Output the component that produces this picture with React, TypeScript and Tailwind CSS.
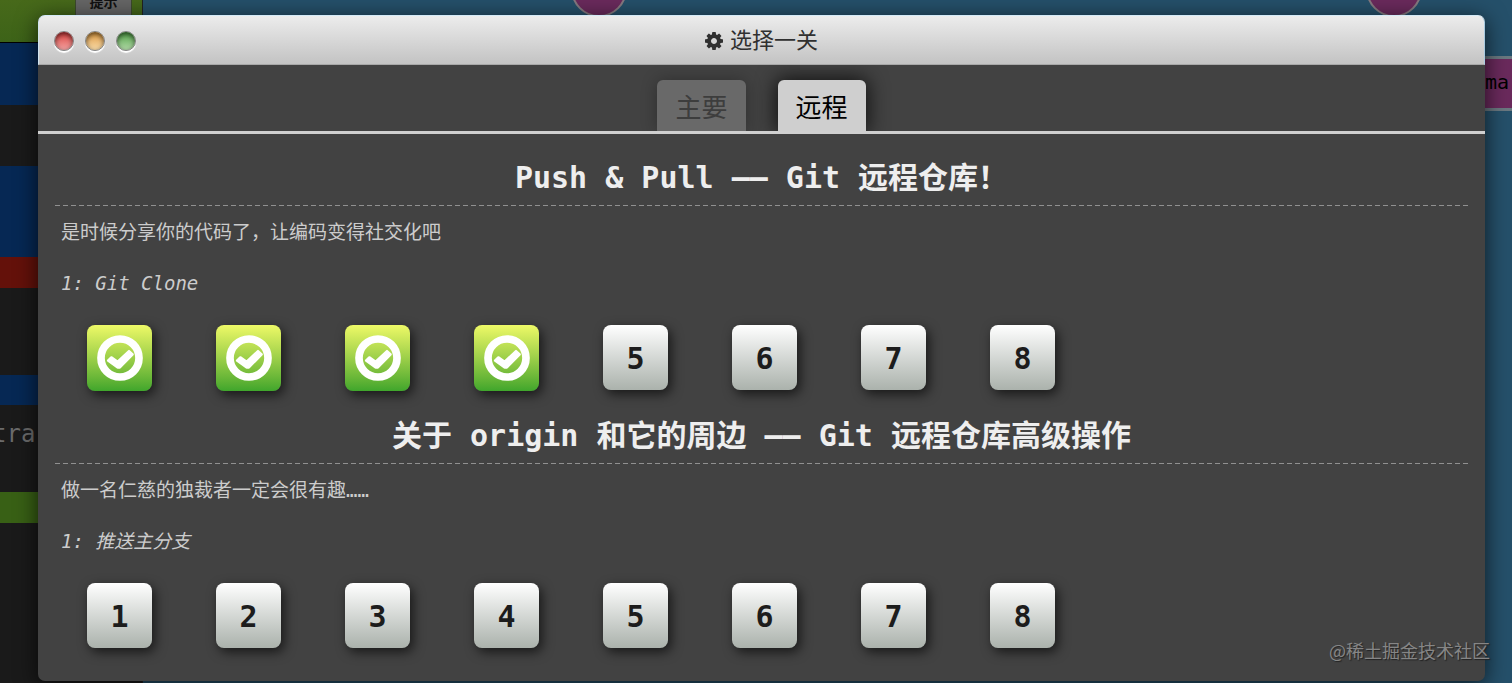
import type { ReactNode } from "react";

const bands = [
  { className: "h-[42px] bg-linear-to-b from-[#47691a] to-[#3d6318]" },
  { className: "h-[63px] bg-[#062854] border-t border-black" },
  { className: "h-[61px] bg-[#1a1a1a]" },
  { className: "h-[91px] bg-[#062854]" },
  { className: "h-[31px] bg-[#64110a]" },
  { className: "h-[87px] bg-[#1a1a1a]" },
  { className: "h-[30px] bg-[#062854]" },
  { className: "h-[87px] bg-[#1a1a1a]", text: "tra" },
  { className: "h-[31px] bg-[#386015]" },
];

const series = [
  {
    title: "Push & Pull —— Git 远程仓库！",
    about: "是时候分享你的代码了，让编码变得社交化吧",
    name: "1: Git Clone",
    solved: 4,
  },
  {
    title: "关于 origin 和它的周边 —— Git 远程仓库高级操作",
    about: "做一名仁慈的独裁者一定会很有趣……",
    name: "1: 推送主分支",
    solved: 0,
  },
];

const levels = [1, 2, 3, 4, 5, 6, 7, 8];

function GearIcon() {
  return (
    <svg viewBox="128 128 1536 1536" className="size-[18px]" fill="currentColor" aria-hidden="true">
      <path d="M1152 896q0-106-75-181t-181-75-181 75-75 181 75 181 181 75 181-75 75-181zm512-109v222q0 12-8 23t-20 13l-185 28q-19 54-39 91 35 50 107 138 10 12 10 25t-9 23q-27 37-99 108t-94 71q-12 0-26-9l-138-108q-44 23-91 38-16 136-29 186-7 28-36 28h-222q-14 0-24.5-8.5t-11.5-21.5l-28-184q-49-16-90-37l-141 107q-10 9-25 9-14 0-25-11-126-114-165-168-7-10-7-23 0-12 8-23 15-21 51-66.5t54-70.5q-27-50-41-99l-183-27q-13-2-21-12.5t-8-23.5v-222q0-12 8-23t19-13l186-28q14-46 39-92-40-57-107-138-10-12-10-24 0-10 9-23 26-36 98.5-107.5t94.5-71.5q13 0 26 10l138 107q44-23 91-38 16-136 29-186 7-28 36-28h222q14 0 24.5 8.5t11.5 21.5l28 184q49 16 90 37l142-107q9-9 24-9 13 0 25 10 129 119 165 170 7 8 7 22 0 12-8 23-15 21-51 66.5t-54 70.5q26 50 41 98l183 28q13 2 21 12.5t8 23.5z" />
    </svg>
  );
}

function CheckIcon() {
  return (
    <svg viewBox="0 0 138 138" className="size-[46px]" aria-hidden="true">
      <circle cx="69" cy="69" r="57" fill="none" stroke="currentColor" strokeWidth="23" />
      <path
        d="M33 77L43 67L62 80L96 48L107 58L70 96Q66 99 61 97Z"
        fill="currentColor"
        stroke="currentColor"
        strokeWidth="7"
        strokeLinejoin="round"
      />
    </svg>
  );
}

function Light({ label, className }: { label: string; className: string }) {
  return (
    <button
      type="button"
      aria-label={label}
      className={`size-5 rounded-full border border-[#858585] shadow-[0_2px_1px_#ffffff,inset_0_2px_5px_rgba(0,0,0,0.6)] ${className}`}
    />
  );
}

function Tab({ active, children }: { active?: boolean; children: ReactNode }) {
  return (
    <button
      type="button"
      role="tab"
      aria-selected={active ? true : false}
      className={`h-[51px] rounded-t-[6px] px-[18px] pt-1 text-[26px] leading-[46px] ${
        active
          ? "bg-[#cfcfcf] text-black shadow-[0_0_20px_2px_rgba(0,0,0,0.75)]"
          : "bg-[#696969] text-[#3d3d3d] shadow-[0_0_16px_rgba(0,0,0,0.3)]"
      }`}
    >
      {children}
    </button>
  );
}

function Level({ number, solved }: { number: number; solved: boolean }) {
  return (
    <button
      type="button"
      aria-label={`${number}`}
      className={`flex w-[65px] items-center justify-center rounded-[8px] text-[30px] font-bold shadow-[3px_4px_12px_rgba(0,0,0,0.65)] ${
        solved
          ? "h-[66px] bg-linear-to-b from-[#eef967] to-[#3fa62c] text-white"
          : "h-[65px] bg-linear-to-b from-white to-[#abb2ac] pt-[2px] text-[#1c1c1c]"
      }`}
    >
      {solved ? <CheckIcon /> : number}
    </button>
  );
}

function Backdrop() {
  return (
    <div className="absolute inset-0 flex overflow-hidden bg-[#25506a]" aria-hidden="true">
      <div className="relative w-[143px] border-r border-[#222222] bg-[#1a1a1a]">
        {bands.map((band, i) => (
          <div key={i} className={band.className}>
            {band.text && (
              <div className="-ml-2 pt-[12px] text-[24px] leading-[34px] text-[#6b6b6b]">{band.text}</div>
            )}
          </div>
        ))}
        <div className="absolute left-[75px] top-0 h-6 w-[57px] border-x border-[#3c4a2c] bg-[#666666] text-center text-[14px] font-bold leading-[4px] text-[#111111]">
          提示
        </div>
      </div>
      <div className="relative grow">
        <div className="absolute -top-[39px] left-[428px] size-[56px] rounded-full border-2 border-[#857a80] bg-[#6a2a5c]" />
        <div className="absolute -top-[39px] right-[90px] size-[56px] rounded-full border-2 border-[#857a80] bg-[#6a2a5c]" />
        <div className="absolute -right-8 top-[56px] flex h-[55px] w-[70px] items-center border-[3px] border-[#6a7880] bg-[#6a2a5c] pb-1 pl-2 text-[20px] text-black">
          ma.
        </div>
      </div>
    </div>
  );
}

export default function App() {
  return (
    <div className="relative min-h-screen overflow-hidden pb-[2px] pl-[38px] pr-[27px] pt-[15px] font-['DejaVu_Sans_Mono','Noto_Sans_CJK_SC',monospace]">
      <Backdrop />
      <main className="relative min-h-[666px] rounded-[7px] bg-[#424242] shadow-[0_4px_22px_rgba(0,0,0,0.7)]">
        <header className="flex h-[50px] items-center rounded-t-[7px] border border-b-[#a8a8a8] border-l-[#cfe3ee] border-r-[#a9cbe0] border-t-[#d3e9f6] bg-linear-to-b from-[#ececec] to-[#c3c3c3] px-[15px] pt-[2px]">
          <div className="flex flex-1 gap-[11px]">
            <Light label="关闭" className="bg-linear-to-b from-[#d8393c] to-[#f3a3a3]" />
            <Light label="最小化" className="bg-linear-to-b from-[#dd9a3c] to-[#f8dba8]" />
            <Light label="最大化" className="bg-linear-to-b from-[#4fa044] to-[#b2dba8]" />
          </div>
          <h1 className="flex items-center gap-[7px] text-[22px] leading-8 text-[#303030]">
            <GearIcon />
            选择一关
          </h1>
          <div className="flex-1" />
        </header>
        <div
          role="tablist"
          className="flex justify-center gap-8 overflow-hidden border-b-[3px] border-[#d0d0d0] pt-[15px]"
        >
          <Tab>主要</Tab>
          <Tab active>远程</Tab>
        </div>
        <div className="px-[17px] pt-4">
          {series.map((item) => (
            <section key={item.title} className="h-[258px]">
              <h2 className="h-[55px] text-center text-[30px] font-bold leading-[56px] text-[#eeeeee]">
                {item.title}
              </h2>
              <div className="h-px bg-[repeating-linear-gradient(to_right,#909090_0_5px,transparent_5px_8px)]" />
              <p className="px-[6px] pt-[10px] text-[19px] leading-8 text-[#cccccc]">{item.about}</p>
              <h3 className="px-[6px] pt-[19px] text-[19px] italic leading-8 text-[#cccccc]">{item.name}</h3>
              <div className="flex items-start gap-16 pl-8 pt-[26px]">
                {levels.map((n) => (
                  <Level key={n} number={n} solved={n <= item.solved} />
                ))}
              </div>
            </section>
          ))}
        </div>
      </main>
      <div className="absolute bottom-[17px] right-[22px] font-['Noto_Sans_CJK_SC',sans-serif] text-[18px] leading-8 text-[#868686] [text-shadow:1px_1px_1px_#222222]">
        @稀土掘金技术社区
      </div>
    </div>
  );
}
